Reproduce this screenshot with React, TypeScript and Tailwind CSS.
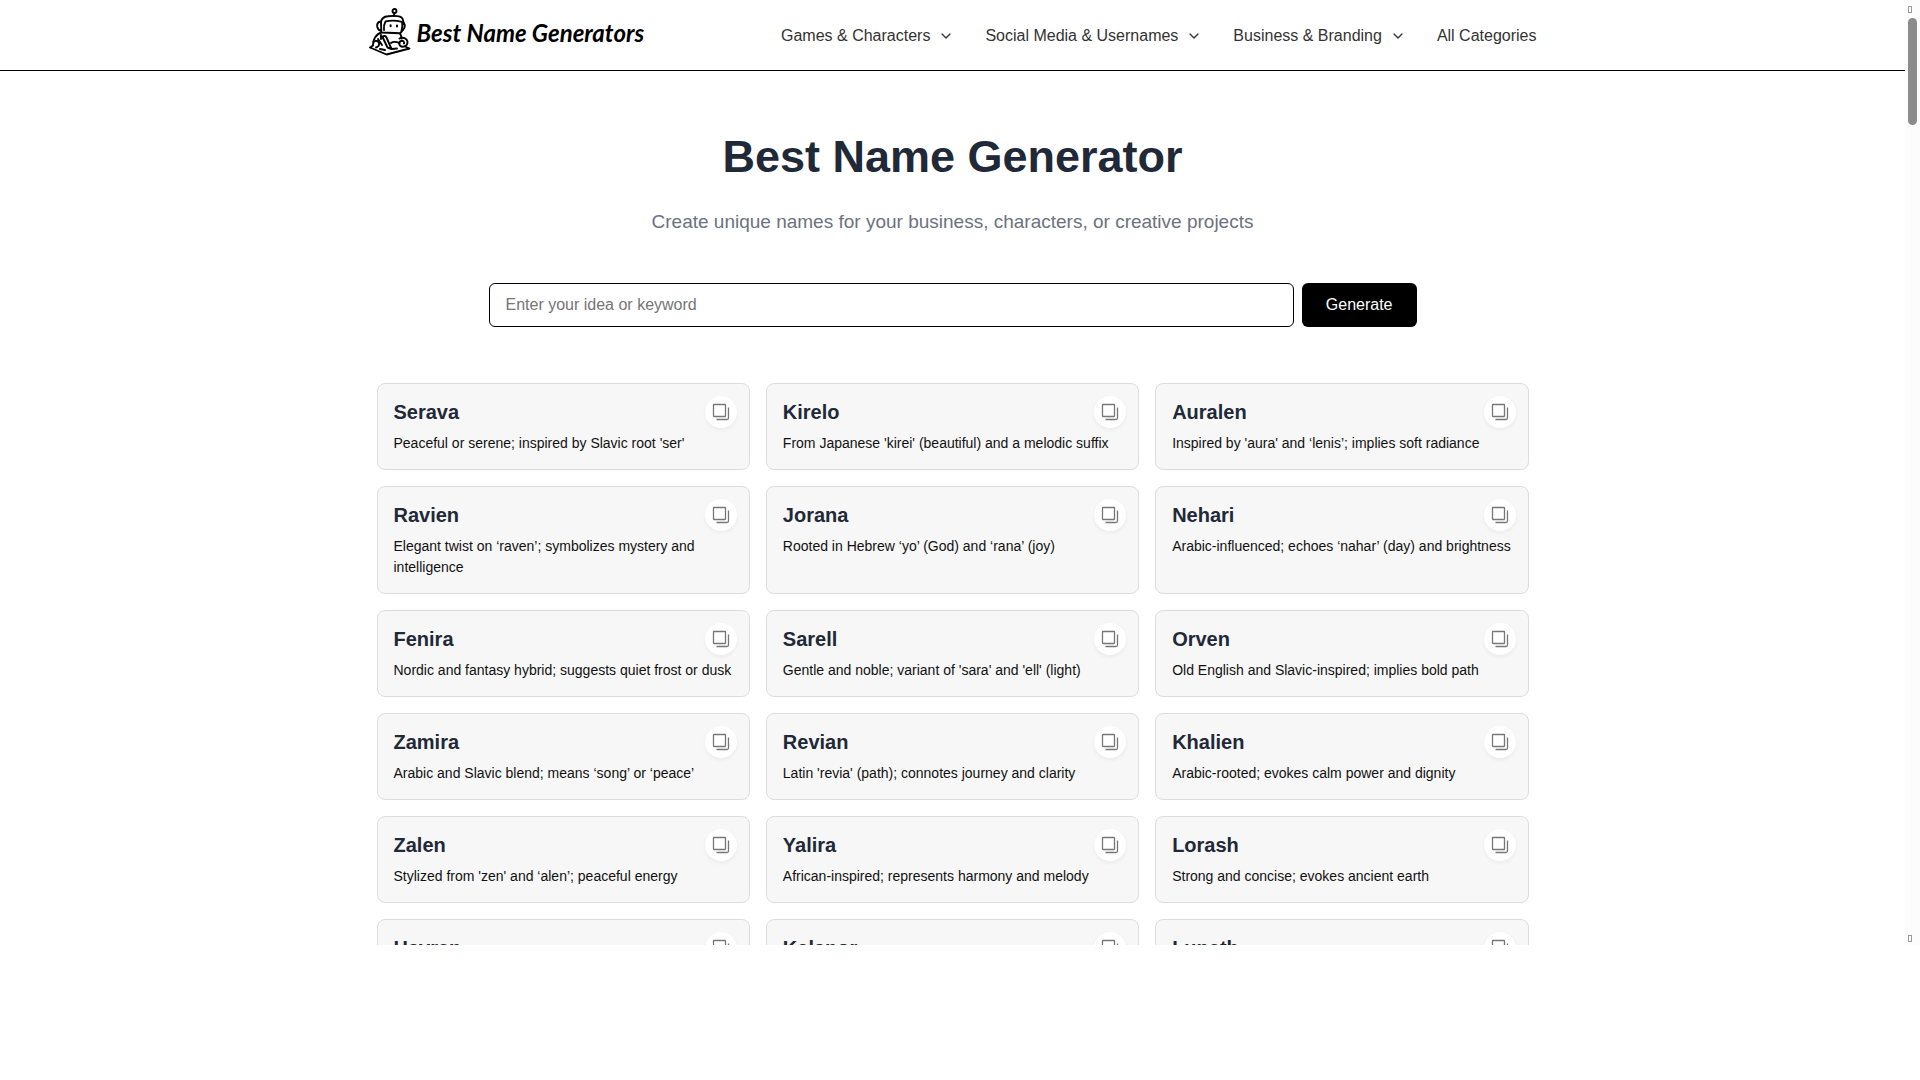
import { ChevronDown } from "lucide-react";

interface GeneratedName {
  name: string;
  meaning: string;
}

const navItems = [
  { label: "Games & Characters", hasMenu: true },
  { label: "Social Media & Usernames", hasMenu: true },
  { label: "Business & Branding", hasMenu: true },
  { label: "All Categories", hasMenu: false },
];

const names: GeneratedName[] = [
  { name: "Serava", meaning: "Peaceful or serene; inspired by Slavic root 'ser'" },
  { name: "Kirelo", meaning: "From Japanese 'kirei' (beautiful) and a melodic suffix" },
  { name: "Auralen", meaning: "Inspired by 'aura' and ‘lenis’; implies soft radiance" },
  { name: "Ravien", meaning: "Elegant twist on ‘raven’; symbolizes mystery and intelligence" },
  { name: "Jorana", meaning: "Rooted in Hebrew ‘yo’ (God) and ‘rana’ (joy)" },
  { name: "Nehari", meaning: "Arabic-influenced; echoes ‘nahar’ (day) and brightness" },
  { name: "Fenira", meaning: "Nordic and fantasy hybrid; suggests quiet frost or dusk" },
  { name: "Sarell", meaning: "Gentle and noble; variant of 'sara' and 'ell' (light)" },
  { name: "Orven", meaning: "Old English and Slavic-inspired; implies bold path" },
  { name: "Zamira", meaning: "Arabic and Slavic blend; means ‘song’ or ‘peace’" },
  { name: "Revian", meaning: "Latin 'revia' (path); connotes journey and clarity" },
  { name: "Khalien", meaning: "Arabic-rooted; evokes calm power and dignity" },
  { name: "Zalen", meaning: "Stylized from 'zen' and ‘alen’; peaceful energy" },
  { name: "Yalira", meaning: "African-inspired; represents harmony and melody" },
  { name: "Lorash", meaning: "Strong and concise; evokes ancient earth" },
  { name: "Havren", meaning: "" },
  { name: "Kelanor", meaning: "" },
  { name: "Luneth", meaning: "" },
];

const RobotLogo = () => (
  <svg
    viewBox="0 0 42 48"
    className="h-12 w-[42px]"
    fill="none"
    stroke="#000"
    strokeWidth="1.9"
    strokeLinecap="round"
    strokeLinejoin="round"
    aria-hidden="true"
  >
    <circle cx="25.5" cy="3" r="2" />
    <path d="M25.3 5.300 25 8" />
    <path d="M12 14c.5-4 3-5.500 7-5.800 5-.5 9-.5 12 .4 3 1 3.500 4 3.500 7.400" />
    <path d="M15 22c-.4-3.500 0-6 1.500-8.500 4-1 11-1 16.500.3.800 3 .4 6-.5 9" />
    <path d="M11.500 13.500c-2.700.6-3.700 3-3.200 5.500.5 2 1.700 3.500 3.700 3.500M35 15c1.300 2 1 6-1.500 7" />
    <path d="M12 14l.3 10.500c6 .2 13 .8 19 .7l2.500-3" />
    <path d="M21.600 17.300v1M28 17.600v1" strokeWidth="2" />
    <path d="M12 24.500c-5 2-7.500 6-8 12M12 27v4M31 25.500c1 1.500 1.500 3 1.500 5" />
    <path d="M4.500 34c2-2 5-1 5.500 1s-.5 4-3 4.500M9 31l4 6" />
    <path d="M13.500 29c1-1.500 3.200-1.200 4 .5L22.500 41l-4-1.500-5-10.500Z" />
    <path d="M30.500 30.500c3.500-2 7.500 0 8 3.200.4 3-2 5-5 5-3.500 0-4.500-4.500-1.500-5.700 2-.7 3.500.5 3 2.500" />
    <path d="M22 35c2-1.500 5-1.500 8.500 0" />
    <path d="M4 37.500 1 39.500 17.500 46.500 40.500 40.500 36 38.500M11 41l5 1M23 41l5-.5" />
  </svg>
);

const CopyIcon = () => (
  <svg viewBox="0 0 18 18" className="size-[18px]" fill="none" stroke="#777" strokeWidth="1.3" aria-hidden="true">
    <rect x="1.500" y="1.500" width="12" height="12" rx="0.5" />
    <path d="M16.500 4.500v10.500q0 1.500-1.500 1.500H4.500" />
  </svg>
);

const Header = () => (
  <header className="border-b border-black">
    <div className="mx-auto flex h-[70px] max-w-[1168px] items-center justify-between">
      <a href="#" className="flex items-center gap-1.5 pb-1.5">
        <RobotLogo />
        <span className="pt-0.5 font-['Lato'] text-2xl font-bold whitespace-nowrap italic">Best Name Generators</span>
      </a>
      <nav className="flex items-center gap-[31px] pt-0.5 text-base text-[#333]">
        {navItems.map(({ label, hasMenu }) => (
          <a key={label} href="#" className="flex items-center gap-2">
            {label}
            {hasMenu && <ChevronDown className="size-4" strokeWidth={2} />}
          </a>
        ))}
      </nav>
    </div>
  </header>
);

const NameCard = ({ name, meaning }: GeneratedName) => (
  <li className="relative rounded-lg border border-[#ddd] bg-[#f7f7f7] px-4 pt-4 pb-[15px]">
    <h2 className="mb-[9px] text-xl leading-6 font-bold text-[#1f2937]">{name}</h2>
    <p className="min-h-[21px] text-sm leading-[21px] text-[#111]">{meaning}</p>
    <button
      type="button"
      aria-label={`Copy ${name}`}
      className="absolute top-3 right-3 flex size-8 items-center justify-center rounded-full bg-white shadow-[0_2px_4px_rgba(0,0,0,0.05)]"
    >
      <CopyIcon />
    </button>
  </li>
);

const Scrollbar = () => (
  <div className="flex w-[15px] shrink-0 flex-col bg-[#fcfcfc] pt-1.5 pb-[3px] pl-[3px]" aria-hidden="true">
    <span className="h-[7px] w-1 border border-[#999]" />
    <span className="mt-[5px] h-[107px] w-[9px] rounded-full bg-[#8b8b8b]" />
    <span className="mt-auto h-[7px] w-1 border border-[#999]" />
  </div>
);

export default function App() {
  return (
    <div className="flex h-[87.5vh] overflow-hidden bg-white font-['Liberation_Sans',sans-serif]">
      <div className="min-w-0 flex-1">
        <Header />
        <main className="mx-auto max-w-[1152px] pt-[59px]">
          <h1 className="text-center text-[45px] leading-[54px] font-bold text-[#1f2937]">Best Name Generator</h1>
          <p className="mt-[23px] text-center text-[19px] leading-[30px] text-[#6b7280]">
            Create unique names for your business, characters, or creative projects
          </p>
          <form className="mx-auto mt-[46px] flex max-w-[928px] gap-2">
            <input
              type="text"
              aria-label="Idea or keyword"
              placeholder="Enter your idea or keyword"
              className="h-11 min-w-0 flex-1 rounded-md border border-black px-4 text-base placeholder:text-[#757575]"
            />
            <button type="button" className="h-11 rounded-md bg-black px-6 text-base text-white">
              Generate
            </button>
          </form>
          <ul className="mt-14 grid grid-cols-3 gap-4">
            {names.map((item) => (
              <NameCard key={item.name} {...item} />
            ))}
          </ul>
        </main>
      </div>
      <Scrollbar />
    </div>
  );
}
